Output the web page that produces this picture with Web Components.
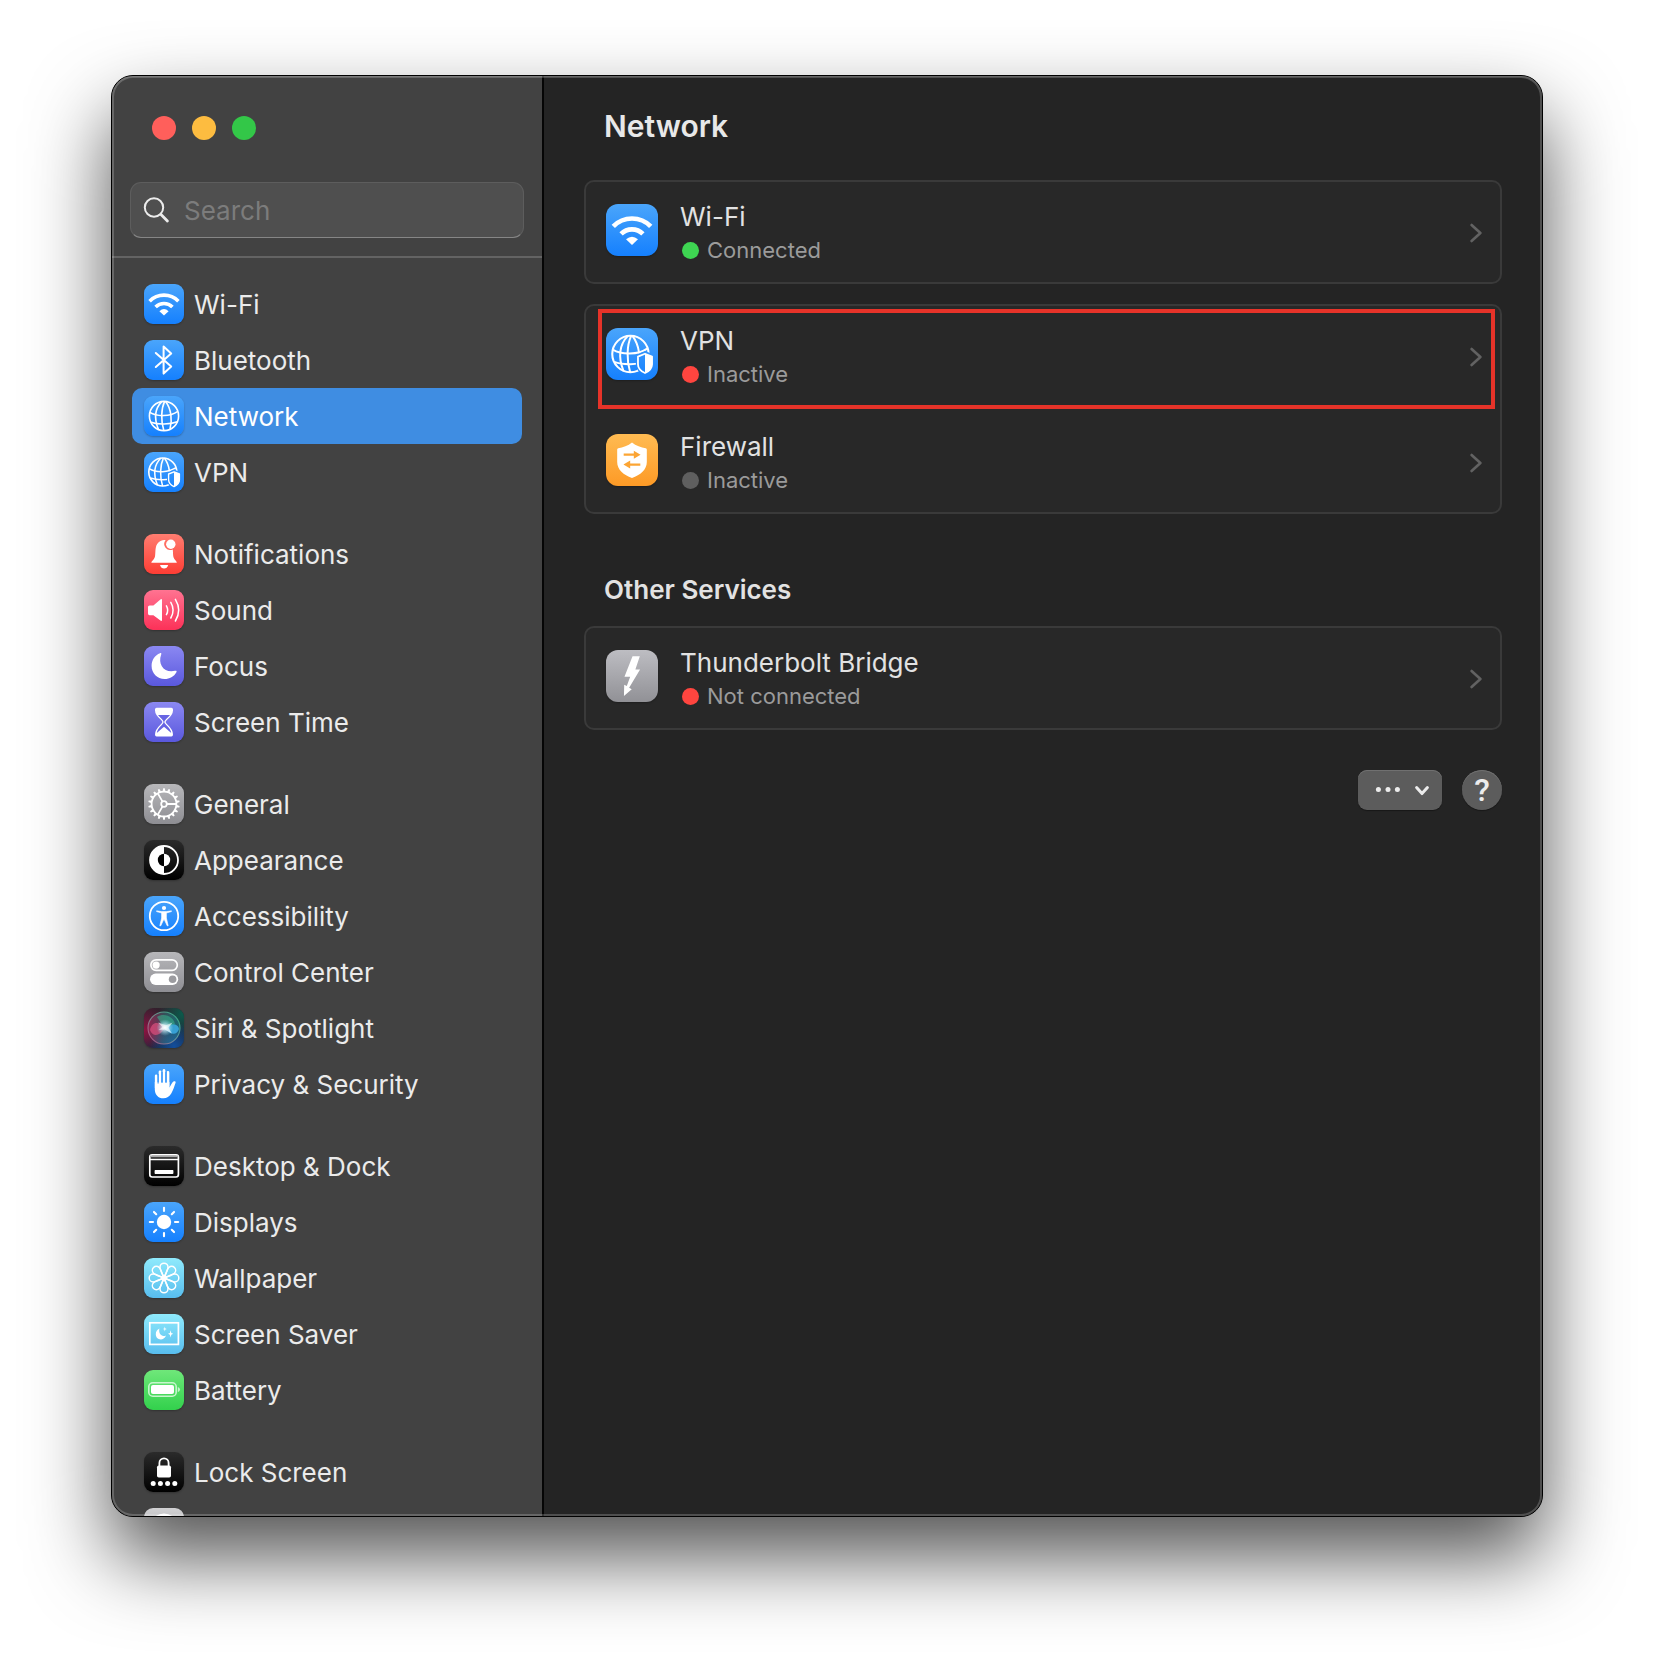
<!DOCTYPE html>
<html lang="en">
<head>
<meta charset="utf-8">
<meta name="viewport" content="width=device-width, initial-scale=1">
<title>Network</title>
<style>
  body { margin: 0; background: #fff; font-family: Inter, "Liberation Sans", sans-serif; }
</style>
</head>
<body>
<settings-window>
  <settings-sidebar slot="sidebar">
    <nav-group>
      <nav-item icon="wifi">Wi-Fi</nav-item>
      <nav-item icon="bluetooth">Bluetooth</nav-item>
      <nav-item icon="globe" selected>Network</nav-item>
      <nav-item icon="vpn">VPN</nav-item>
    </nav-group>
    <nav-group>
      <nav-item icon="bell">Notifications</nav-item>
      <nav-item icon="sound">Sound</nav-item>
      <nav-item icon="moon">Focus</nav-item>
      <nav-item icon="hourglass">Screen Time</nav-item>
    </nav-group>
    <nav-group>
      <nav-item icon="gear">General</nav-item>
      <nav-item icon="appearance">Appearance</nav-item>
      <nav-item icon="accessibility">Accessibility</nav-item>
      <nav-item icon="toggles">Control Center</nav-item>
      <nav-item icon="siri">Siri &amp; Spotlight</nav-item>
      <nav-item icon="hand">Privacy &amp; Security</nav-item>
    </nav-group>
    <nav-group>
      <nav-item icon="dock">Desktop &amp; Dock</nav-item>
      <nav-item icon="sun">Displays</nav-item>
      <nav-item icon="flower">Wallpaper</nav-item>
      <nav-item icon="saver">Screen Saver</nav-item>
      <nav-item icon="battery">Battery</nav-item>
    </nav-group>
    <nav-group>
      <nav-item icon="lock">Lock Screen</nav-item>
      <nav-item icon="fingerprint"></nav-item>
    </nav-group>
  </settings-sidebar>
  <network-pane>
    <service-card>
      <service-row icon="wifi" state="on">Wi-Fi<span slot="status">Connected</span></service-row>
    </service-card>
    <service-card>
      <service-row icon="vpn" state="off" marked>VPN<span slot="status">Inactive</span></service-row>
      <service-row icon="firewall" state="idle">Firewall<span slot="status">Inactive</span></service-row>
    </service-card>
    <service-card heading="Other Services">
      <service-row icon="thunderbolt" state="off">Thunderbolt Bridge<span slot="status">Not connected</span></service-row>
    </service-card>
  </network-pane>
</settings-window>

<script>
const BLUE = ['#4aa5fb', '#1580fe'];
const GRAY = ['#b7b7ba', '#8e8e93'];
const BLACK = ['#2b2b2b', '#000'];
const CYAN = ['#8feafc', '#58bdee'];
const INDIGO = ['#8b88f2', '#5a58dd'];

const petals = Array.from({length: 8}, (_, i) =>
  `<path transform="rotate(${i * 45} 20 20)" d="M21.8 22.4C18.6 17 16 12 16 9.2A4 4 0 0 1 24 9.2C24 12 21.4 17 18.2 22.4"/>`).join('');
const rays = Array.from({length: 8}, (_, i) =>
  `<path transform="rotate(${i * 45} 20 20)" d="M20 5.8V9"/>`).join('');
const teeth = Array.from({length: 18}, (_, i) =>
  `<path transform="rotate(${i * 20} 20 20)" d="M18.6 7.6L19.2 4.3H20.8L21.4 7.6Z"/>`).join('');
const globeLines = `
  <path d="M17.8 5.6C11.4 12 9.8 22 14.4 33.4"/>
  <path d="M20.6 5.4C17 13 16.8 25 19.8 34.6"/>
  <path d="M21.6 5.4C27.4 13 28.4 24 26 33"/>
  <path d="M5.8 16.4C13 20.8 26 20.8 33.8 15.4"/>
  <path d="M7 26.2C14 28.8 26 28.6 33.4 25.8"/>`;

const ICONS = {
  wifi: [BLUE, `<g fill="none" stroke="#fff" stroke-width="3.6"><path d="M5.6 17.2A20.2 20.2 0 0 1 34.4 17.2"/><path d="M11.6 23A11.8 11.8 0 0 1 28.4 23"/></g><path fill="#fff" d="M15.4 27.2Q20 23 24.6 27.2L20 31.6Z"/>`],
  bluetooth: [BLUE, `<path fill="none" stroke="#fff" stroke-width="2" stroke-linejoin="round" stroke-linecap="round" d="M11.8 13L27.2 26.6L19.6 33.6V6.6L27.2 13.5L11.8 27"/>`],
  globe: [BLUE, `<g fill="none" stroke="#fff" stroke-width="1.6"><circle cx="20" cy="20" r="14.6"/>${globeLines}</g>`],
  vpn: [BLUE, `<mask id="m"><path fill="#fff" d="M0 0H40V40H0Z"/><path d="M30 17.6L23 20.6V28C23 32 26 34.6 30 36.6C34 34.6 37.6 32 37.6 28V20.6Z"/></mask>
    <g mask="url(#m)"><g fill="none" stroke="#fff" stroke-width="1.6" transform="translate(-.6 .4)"><circle cx="19.4" cy="19.6" r="14"/><g transform="translate(.2 .5) scale(.96)">${globeLines}</g></g></g>
    <path fill="none" stroke="#fff" stroke-width="1.4" stroke-linejoin="round" d="M30 19.8L24.6 22V27.8C24.6 31 27 33.2 30 34.6C33 33.2 35.4 31 35.4 27.8V22Z"/><path fill="#fff" d="M30 19.8L35.6 22V27.8C35.6 31 33 33.2 30 34.6Z"/>`],
  bell: [['#ff7d70', '#fd3d34'], `<path fill="#fff" d="M7.4 28.8C7.2 27.4 10.4 25.6 11 22.6C11.8 18.4 10.6 12.2 14.4 8.6C16.4 6.6 19 5.6 21.6 6.2A6 6 0 0 0 28.8 15.4C29.2 19.8 28.8 22.4 30.2 24.8C31.4 26.8 33 27.6 32.8 28.8Z"/><path fill="#fff" d="M16 31H24.2C23.6 33.4 22 34.6 20.1 34.6C18.2 34.6 16.6 33.4 16 31Z"/><circle cx="26.8" cy="10.2" r="4.7" fill="#fff"/>`],
  sound: [['#ff7391', '#fc3158'], `<path fill="#fff" d="M5.6 15.4H9.4L16.4 9.4Q18 8.6 18 10V30Q18 31.4 16.4 30.6L9.4 25.2H5.6Q4 25.2 4 23.6V17Q4 15.4 5.6 15.4Z"/><g fill="none" stroke="#fff" stroke-width="1.5" stroke-linecap="round"><path d="M22.4 15.8Q25 20.2 22.4 24.6"/><path d="M26.8 12.4Q31.4 20.2 26.8 28"/><path d="M31.4 9.4Q38 20.2 31.4 31"/></g>`],
  moon: [INDIGO, `<path fill="#fff" d="M16 7.2C17 6.9 17.6 7.3 17.2 8.4C13.4 18.6 20.6 27.4 31 24.8C32.4 24.4 33 25 32.4 26.2C30 30.6 25.6 33 20.6 33C13.2 33 7.6 27.2 7.6 20C7.6 14 11 9 16 7.2Z"/>`],
  hourglass: [INDIGO, `<path fill="#fff" d="M12.6 5.8H27.4Q29 5.8 29 7.4V8.4Q29 12.4 23.4 17.6Q21.6 19.4 21.6 20Q21.6 20.6 23.4 22.4Q29 27.6 29 32.4Q29 34.4 27.4 34.4H12.6Q11 34.4 11 32.4Q11 27.6 16.6 22.4Q18.4 20.6 18.4 20Q18.4 19.4 16.6 17.6Q11 12.4 11 8.4V7.4Q11 5.8 12.6 5.8Z"/><path fill="#6764e3" d="M14 13H26Q24.4 15 22.2 17Q20.2 18.8 20.2 20Q20.2 21.2 22.2 23Q27 27.4 27.2 31L20.6 25.2Q20 24.8 19.4 25.2L12.8 31Q13 27.4 17.8 23Q19.6 21.2 19.6 20Q19.6 18.8 17.8 17Q15.6 15 14 13Z"/>`],
  gear: [GRAY, `<g fill="#fff">${teeth}</g><g fill="none" stroke="#fff" stroke-width="1.8"><circle cx="20" cy="20" r="12.4"/><circle cx="20" cy="20" r="2.8"/><path d="M23 20H32.2M18.4 17.4L13.8 9.4M18.4 22.6L13.8 30.6"/></g>`],
  appearance: [BLACK, `<circle cx="20" cy="20" r="14" fill="none" stroke="#fff" stroke-width="1.8"/><path fill="#fff" d="M20 6A14 14 0 0 0 20 34Z"/><path fill="#000" d="M20 13.8A6.2 6.2 0 0 0 20 26.2Z"/><path fill="#fff" d="M20 13.8A6.2 6.2 0 0 1 20 26.2Z"/>`],
  accessibility: [BLUE, `<circle cx="20" cy="20" r="14.2" fill="none" stroke="#fff" stroke-width="1.8"/><circle cx="20" cy="12" r="2.1" fill="#fff"/><path fill="#fff" stroke="#fff" stroke-width=".6" stroke-linejoin="round" d="M12.6 14.8L17.6 15.6H22.4L27.4 14.8V15.6L22.4 17V22L24.2 29.8H23.2L20.4 23.8H19.6L16.8 29.8H15.8L17.6 22V17L12.6 15.6Z"/>`],
  toggles: [GRAY, `<rect x="6.9" y="7.9" width="26.4" height="10.4" rx="5.2" fill="none" stroke="#fff" stroke-width="1.7"/><circle cx="12.1" cy="13.1" r="3.6" fill="#fff"/><rect x="6" y="21.6" width="28.2" height="11.4" rx="5.7" fill="#fff"/><circle cx="28.6" cy="27.3" r="3.8" fill="#9c9ca0"/>`],
  siri: [['#33202c', '#12283c'], `<defs>
      <radialGradient id="r" cx="0" cy=".55" r=".62"><stop stop-color="#8f1240"/><stop offset="1" stop-color="#8f1240" stop-opacity="0"/></radialGradient>
      <radialGradient id="g" cx=".95" cy=".15" r=".6"><stop stop-color="#0b5a4b"/><stop offset="1" stop-color="#0b5a4b" stop-opacity="0"/></radialGradient>
      <radialGradient id="b" cx=".75" cy=".95" r=".6"><stop stop-color="#134e9c"/><stop offset="1" stop-color="#134e9c" stop-opacity="0"/></radialGradient>
      <radialGradient id="w"><stop stop-color="#fff"/><stop offset=".3" stop-color="#d9f4ff" stop-opacity=".8"/><stop offset="1" stop-color="#7fd8f0" stop-opacity="0"/></radialGradient>
      <linearGradient id="o" x1="0" y1=".4" x2="1" y2=".5"><stop stop-color="#b82f63"/><stop offset=".5" stop-color="#487884"/><stop offset="1" stop-color="#2390a8"/></linearGradient>
      <linearGradient id="t" x1="0" y1="1" x2="1" y2="0"><stop stop-color="#c9558f"/><stop offset=".6" stop-color="#6cae9e"/><stop offset="1" stop-color="#35bd8f"/></linearGradient></defs>
    <path fill="url(#r)" d="M0 0H40V40H0Z"/><path fill="url(#g)" d="M0 0H40V40H0Z"/><path fill="url(#b)" d="M0 0H40V40H0Z"/>
    <circle cx="20" cy="20" r="16" fill="url(#o)" fill-opacity=".45" stroke="url(#t)" stroke-opacity=".8" stroke-width="1.1"/>
    <path fill="#e0507f" opacity=".7" d="M6 22C8 13 15 13 21 20C16 28 9 30 6 22Z"/><path fill="#3fb6f2" opacity=".75" d="M20 20C26 15 34 15 35 21C33 28 26 27 20 20Z"/><path fill="#37bf93" opacity=".5" d="M13 9C20 4 30 9 31 16C25 18 21 20 20 20C18 16 15 12 13 9Z"/>
    <circle cx="21" cy="19.6" r="8.4" fill="url(#w)"/><path fill="#fff" d="M14 14.6L22 17.2L28.6 14.6L24.4 19.8L28 25.6L20.6 21.6L14.6 22L18.4 19Z" opacity=".6"/>`],
  hand: [BLUE, `<g fill="none" stroke="#fff" stroke-width="2.7" stroke-linecap="round"><path d="M12.2 11.8V24M16 7.8V22M20 6.4V22M24 8.4V22"/></g><path fill="#fff" d="M10.8 18H25.4V23.6C27 21.4 28 18.6 29.4 17.6C30.8 16.6 32 17.4 31.6 18.8C30.4 22.2 29.4 25.8 27.4 29.2C25.4 32.6 22.8 34.2 19.4 34.2C14.2 34.2 10.8 30.6 10.8 25.4Z"/><path d="M14.1 10V19.4M18 8V19M22 8V19" stroke="#2f93fd" stroke-width="1.1"/>`],
  dock: [BLACK, `<rect x="5.8" y="8.8" width="28.6" height="22.2" rx="2.4" fill="none" stroke="#fff" stroke-width="1.7"/><path d="M6 10.4H34.2" stroke="#aaa" stroke-width="1.6"/><path d="M6 13.6H34.2" stroke="#fff" stroke-width="1.5"/><rect x="10.6" y="24" width="18.8" height="4" rx=".8" fill="#fff"/>`],
  sun: [BLUE, `<circle cx="20" cy="20" r="7.2" fill="#fff"/><g stroke="#fff" stroke-width="2.1" stroke-linecap="round">${rays}</g>`],
  flower: [CYAN, `<g fill="none" stroke="#fff" stroke-width="1.5">${petals}</g>`],
  saver: [CYAN, `<rect x="5.8" y="8.8" width="28.6" height="21.6" fill="none" stroke="#fff" stroke-width="1.7"/><path fill="#fff" d="M15.4 14.4C14.2 19.4 17.2 22.6 22 21.8C20.6 24.4 18.8 25.4 16.8 25.4C13.8 25.4 11.8 23 11.8 20.2C11.8 17.4 13.2 15.4 15.4 14.4ZM26.6 16.2L27.3 18.9L29.2 19.8L27.3 20.7L26.6 23.4L25.9 20.7L24 19.8L25.9 18.9ZM20.8 12.6L21.3 14.4L22.8 15L21.3 15.6L20.8 17.4L20.3 15.6L18.8 15L20.3 14.4Z"/>`],
  battery: [['#6fe77a', '#32d14c'], `<rect x="4.8" y="12.8" width="27.4" height="13.4" rx="4" fill="none" stroke="#c7f5cd" stroke-width="1.6"/><rect x="7" y="15" width="23" height="9" rx="2" fill="#fff"/><path fill="#c7f5cd" d="M33.8 17V22.2Q36 21.4 36 19.6Q36 17.8 33.8 17Z"/>`],
  lock: [BLACK, `<rect x="13" y="13.4" width="14" height="12.2" rx="1.8" fill="#fff"/><path fill="none" stroke="#fff" stroke-width="1.8" d="M15.4 14V11A4.6 4.6 0 0 1 24.6 11V14"/><g fill="#fff"><circle cx="9.2" cy="31.6" r="2.5"/><circle cx="16.4" cy="31.6" r="2.5"/><circle cx="23.6" cy="31.6" r="2.5"/><circle cx="30.8" cy="31.6" r="2.5"/></g>`],
  fingerprint: [['#d0d0d2', '#a0a0a4'], `<circle cx="20" cy="20" r="13" fill="none" stroke="#fff" stroke-width="3"/>`],
  firewall: [['#ffbb52', '#fd9a26'], `<path fill="#fff" d="M20 6.6C23 9 27 10.6 30.6 11Q31.4 11.2 31.4 12V21.6C31.4 27.6 26.4 31.6 20 33.8C13.6 31.6 8.6 27.6 8.6 21.6V12Q8.6 11.2 9.4 11C13 10.6 17 9 20 6.6Z"/><g fill="#fca534"><path d="M13.6 15H21.4V12.8L26.6 15.9L21.4 19V16.8H13.6ZM26.4 22.6H18.6V20.4L13.4 23.5L18.6 26.6V24.4H26.4Z"/></g>`],
  thunderbolt: [['#bdbdc2', '#919196'], `<path fill="#fff" d="M20.4 4.8H26L22.6 15H26.2L17.8 29L19.8 30.2L13.8 35.4L14 26.8L16 27.6L18.6 20.6H14.2Z"/>`]
};

class ShadowElement extends HTMLElement {
  constructor() { super(); this.attachShadow({mode: 'open'}); }
  connectedCallback() { this.shadowRoot.innerHTML = this.render(); }
}

customElements.define('app-icon', class extends ShadowElement {
  render() {
    const [[top, bottom], art] = ICONS[this.getAttribute('name')];
    return `<style>
      :host { display: block; flex: none; width: var(--icon-size, 40px); height: var(--icon-size, 40px); overflow: hidden;
        border-radius: var(--icon-radius, 9px); background: linear-gradient(${top}, ${bottom}); box-shadow: 0 1px 2px rgba(0,0,0,.25); }
      svg { display: block; width: 100%; height: 100%; }
    </style><svg viewBox="0 0 40 40" aria-hidden="true">${art}</svg>`;
  }
});

customElements.define('nav-item', class extends ShadowElement {
  render() {
    return `<style>
      :host { display: block; }
      a { display: flex; align-items: center; gap: 10px; height: 56px; padding: 0 12px; border-radius: 10px;
        color: #ebebeb; font-size: 26px; line-height: 32px; text-decoration: none; white-space: nowrap; }
      span { padding-top: 2px; }
      :host([selected]) a { background: #3f8de2; color: #fff; }
    </style><a href="#" ${this.hasAttribute('selected') ? 'aria-current="page"' : ''}><app-icon name="${this.getAttribute('icon')}"></app-icon><span><slot></slot></span></a>`;
  }
});

customElements.define('nav-group', class extends ShadowElement {
  render() { return `<style>:host { display: block; }</style><slot></slot>`; }
});

customElements.define('settings-sidebar', class extends ShadowElement {
  render() {
    return `<style>
      :host { display: flex; flex-direction: column; min-height: 0; height: 100%; background: #424242; }
      .lights { display: flex; gap: 16px; padding: 40px 40px 0; }
      .lights button { width: 24px; height: 24px; padding: 0; border: 0; border-radius: 50%; }
      .close { background: #ff5f5b; } .min { background: #fdbc40; } .zoom { background: #33c748; }
      .search { display: flex; align-items: center; gap: 13px; box-sizing: border-box; height: 56px; margin: 42px 18px 18px; padding: 0 12px;
        border: 1px solid #5d5d5d; border-bottom: 1px solid #868686; border-radius: 11px; background: #4f4f4f; }
      .search svg { flex: none; width: 28px; height: 28px; }
      input { flex: 1; min-width: 0; padding: 2px 0 0; border: 0; outline: 0; background: none; color: #ebebeb; font: inherit; font-size: 26px; line-height: 32px; }
      input::placeholder { color: #7c7c7c; opacity: 1; }
      nav { display: flex; flex-direction: column; gap: 26px; flex: 1; min-height: 0; overflow: hidden; padding: 18px 20px 0; border-top: 2px solid #636363; }
    </style>
    <div class="lights"><button class="close" aria-label="Close"></button><button class="min" aria-label="Minimize"></button><button class="zoom" aria-label="Zoom"></button></div>
    <label class="search"><svg viewBox="0 0 28 28" fill="none" stroke="#ececec" stroke-width="2" stroke-linecap="round" aria-hidden="true"><circle cx="11" cy="11.5" r="9.2"/><path stroke-width="2.8" d="M18 18.5L24.4 25"/></svg><input type="text" placeholder="Search" aria-label="Search"></label>
    <nav><slot></slot></nav>`;
  }
});

customElements.define('service-row', class extends ShadowElement {
  render() {
    return `<style>
      :host { display: block; position: relative; }
      a { display: flex; align-items: flex-start; gap: 22px; height: 58px; padding: 22px 18px 20px 20px; color: #e2e2e2; text-decoration: none;
        --icon-size: 52px; --icon-radius: 12px; }
      .text { flex: 1; min-width: 0; }
      .name { display: block; font-size: 26px; line-height: 26px; }
      .status { display: flex; align-items: center; gap: 8px; height: 32px; padding-top: 4px; padding-left: 2px; color: #9b9b9b; font-size: 22px; line-height: 32px; }
      .status::before { content: ""; flex: none; width: 17px; height: 17px; border-radius: 50%; background: #5f5f5f; }
      :host([state=on]) .status::before { background: #3ed552; }
      :host([state=off]) .status::before { background: #ff453f; }
      .chevron { align-self: center; flex: none; width: 12px; height: 20px; }
      :host([marked])::after { content: ""; position: absolute; inset: 3px 5px -3px 12px; border: 4px solid #e63329; pointer-events: none; }
    </style><a href="#"><app-icon name="${this.getAttribute('icon')}"></app-icon>
      <span class="text"><span class="name"><slot></slot></span><span class="status"><slot name="status"></slot></span></span>
      <svg class="chevron" viewBox="0 0 12 20" fill="none" stroke="#626262" stroke-width="2.6" stroke-linecap="round" stroke-linejoin="round" aria-hidden="true"><path d="M1.6 2L10.4 10L1.6 18"/></svg></a>`;
  }
});

customElements.define('service-card', class extends ShadowElement {
  render() {
    const heading = this.getAttribute('heading');
    return `<style>
      :host { display: block; }
      h2 { margin: 40px 0 20px; padding-left: 20px; color: #e2e2e2; font-size: 26px; line-height: 32px; font-weight: 600; }
      .card { display: flex; flex-direction: column; gap: 6px; border: 2px solid #3a3a3a; border-radius: 10px; background: #282828; }
    </style>${heading ? `<h2>${heading}</h2>` : ''}<div class="card"><slot></slot></div>`;
  }
});

customElements.define('network-pane', class extends ShadowElement {
  render() {
    return `<style>
      :host { display: block; min-width: 0; box-sizing: border-box; height: 100%; overflow: hidden; padding: 30px 40px 0; background: #242424; }
      h1 { margin: 0 0 34px; padding-left: 20px; color: #e8e8e8; font-size: 30px; line-height: 40px; font-weight: 600; }
      .cards { display: flex; flex-direction: column; gap: 20px; }
      .actions { display: flex; justify-content: flex-end; gap: 20px; padding-top: 40px; }
      button { display: flex; align-items: center; justify-content: center; height: 40px; padding: 0; border: 0; color: #ececec; background: #5c5c5c;
        box-shadow: inset 0 1px #707070, 0 1px 1px rgba(0,0,0,.35); }
      .more { width: 84px; border-radius: 9px; }
      .help { width: 40px; border-radius: 50%; font: 500 32px/40px Roboto, sans-serif; }
      svg { display: block; width: 84px; height: 40px; }
    </style>
    <h1>Network</h1>
    <div class="cards"><slot></slot></div>
    <div class="actions">
      <button class="more" aria-label="More options" aria-haspopup="menu"><svg viewBox="0 0 84 40" aria-hidden="true"><g fill="#ececec"><circle cx="20.4" cy="19.4" r="2.5"/><circle cx="30" cy="19.4" r="2.5"/><circle cx="39.4" cy="19.4" r="2.5"/></g><path d="M58.6 17.6L64 23.6L69.4 17.6" fill="none" stroke="#ececec" stroke-width="3" stroke-linecap="round" stroke-linejoin="round"/></svg></button>
      <button class="help">?</button>
    </div>`;
  }
});

customElements.define('settings-window', class extends ShadowElement {
  render() {
    return `<style>
      :host { display: block; box-sizing: border-box; height: 100vh; padding: 75px 111px 147px; overflow: hidden; }
      main { position: relative; display: grid; grid-template-columns: 432px minmax(0, 1fr); grid-template-rows: minmax(0, 1fr); box-sizing: border-box; height: 100%;
        border: 1px solid #000; border-radius: 22px; background: #242424; box-shadow: 0 40px 80px rgba(0,0,0,.68); }
      .side { box-sizing: border-box; min-height: 0; border-right: 2px solid #050505; border-radius: 21px 0 0 21px; overflow: hidden; }
      .pane { min-width: 0; min-height: 0; border-radius: 0 21px 21px 0; overflow: hidden; }
      main::after { content: ""; position: absolute; inset: 0; border-radius: 21px; box-shadow: inset 0 0 0 2px rgba(255,255,255,.2), inset 0 1px rgba(255,255,255,.14); pointer-events: none; }
    </style><main><div class="side"><slot name="sidebar"></slot></div><div class="pane"><slot></slot></div></main>`;
  }
});
</script>
</body>
</html>
